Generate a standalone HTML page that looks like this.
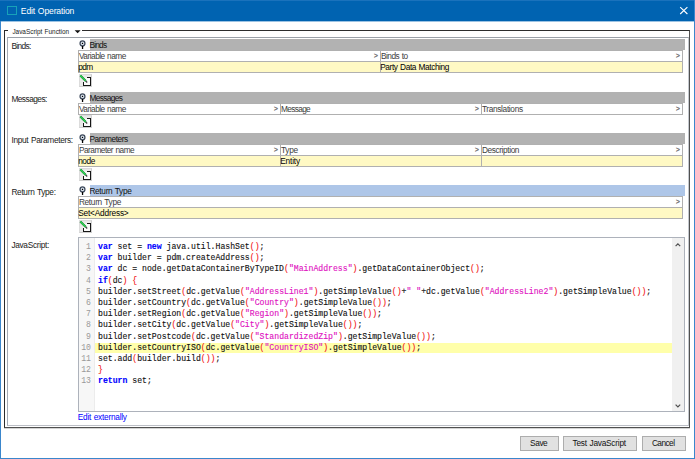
<!DOCTYPE html>
<html><head><meta charset="utf-8"><title>Edit Operation</title>
<style>
html,body{margin:0;padding:0;}
body{width:695px;height:459px;overflow:hidden;background:#fff;position:relative;font-family:"Liberation Sans",sans-serif;font-size:8.3px;letter-spacing:-0.48px;color:#1a1a1a;-webkit-text-stroke:0;word-spacing:0.6px;}
div,span{position:absolute;box-sizing:border-box;white-space:nowrap;}
.t{line-height:10px;height:10px;}
#titlebar{left:0;top:0;width:695px;height:22px;background:linear-gradient(#0063b1 0,#0063b1 21px,#9cc3e3 21px,#9cc3e3 22px);}
#wl{left:0;top:21px;width:1px;height:438px;background:#3a86cc;}
#wr{left:694px;top:0;width:1px;height:459px;background:#3a86cc;}
#wb{left:0;top:458px;width:695px;height:1px;background:#3a86cc;}
#wt{left:0;top:0;width:695px;height:1px;background:#1a72bc;}
#ticon{left:7.2px;top:5.5px;width:9.5px;height:9.6px;border:1px solid #17a2b8;}
#ttext{left:20.8px;top:5px;font-size:8.6px;letter-spacing:-0.15px;color:#fff;line-height:13px;}
.hdr{left:90px;width:595px;height:11px;background:#b2b2b2;}
.hdr.blue{background:#aec6e8;}
.hdr span{top:0.5px;left:-0.6px;letter-spacing:-0.44px;line-height:11px;color:#111;position:absolute;}
.tbl{left:78px;width:605px;border:1px solid #b0b0b0;background:#fff;}
.row{left:0;width:603px;height:10px;}
.row.y{background:#fff9c4;}
.cell{top:0;height:10px;line-height:10px;padding-left:0;margin-left:-0.1px;color:#3c3c3c;}
.row.y .cell{color:#000;margin-left:-0.8px;letter-spacing:-0.4px;}
.sep{width:1px;background:#b0b0b0;top:0;}
.hsep{left:0;width:603px;height:1px;background:#b0b0b0;}
.gt{top:0.1px;line-height:10px;color:#6c6c6c;font-size:6.6px;-webkit-text-stroke:0.35px #6c6c6c;letter-spacing:0;}
.lab{left:11.4px;line-height:10px;color:#1a1a1a;letter-spacing:-0.3px;}
.btn{top:436px;height:15px;background:#e1e1e1;border:1px solid #adadad;text-align:center;line-height:12.5px;color:#111;padding-right:1.6px;}
#code{left:78px;top:237px;width:607px;height:175px;border:1px solid #adb2bb;background:#fff;}
.ln{left:0;width:11.6px;text-align:right;color:#999;letter-spacing:-0.2px !important;}
.cl{left:19px;color:#111;-webkit-text-stroke:0.12px currentColor !important;}
#code .ln,#code .cl{-webkit-text-stroke:0;word-spacing:0;font-family:"Liberation Mono",monospace;font-size:8.17px;letter-spacing:0;line-height:11.2px;height:11.2px;}
.k{position:static;color:#0000ff;font-weight:bold;}
.p{position:static;color:#f21a1a;}
.s{position:static;color:#e010c0;}
</style></head>
<body>
<div id="titlebar"></div><div id="wt"></div><div id="wl"></div><div id="wr"></div><div id="wb"></div>
<div id="ticon"></div><div id="ttext">Edit Operation</div>
<svg style="position:absolute;left:679px;top:6px" width="10" height="10" viewBox="0 0 10 10"><path d="M1.2 1.2 L8.4 8.0 M8.4 1.2 L1.2 8.0" stroke="#fff" stroke-width="1.1" fill="none"/></svg>
<div style="left:4px;top:30px;width:686px;height:398px;border:1px solid;border-color:#2c2c2c #505050 #505050 #2c2c2c;"></div>
<div style="left:8px;top:29px;width:73.5px;height:3px;background:#fff;"></div>
<div style="left:12.4px;top:26.5px;font-size:6.45px;letter-spacing:-0.02px;line-height:9px;color:#1a1a1a;">JavaScript Function</div>
<svg style="position:absolute;left:74px;top:30px" width="8" height="4" viewBox="0 0 8 4"><path d="M0.6 0.2 L6.6 0.2 L3.6 3.3 Z" fill="#111"/></svg>
<div style="left:4px;top:428px;width:686px;height:1px;background:#d4d4d4;"></div>
<div style="left:7px;top:37px;width:682px;height:389px;border:1px solid;border-color:#9aa0a8 #c4c8ce #bcbfc6 #a4aab4;"></div>
<div class="lab t" style="top:41px;letter-spacing:-0.611px;">Binds:</div>
<svg style="position:absolute;left:79px;top:39.5px" width="8" height="10" viewBox="0 0 8 10"><circle cx="3.5" cy="3.4" r="2.45" fill="#d8e0ea" stroke="#3e4a5c" stroke-width="1.25"/><rect x="2.9" y="2.8" width="1.2" height="1.2" fill="#000"/><rect x="2.9" y="6" width="1.3" height="3" fill="#000"/></svg>
<div class="hdr" style="top:39px"><span style="letter-spacing:-0.770px;">Binds</span></div>
<div class="tbl" style="top:50px;height:23px">
<div class="row" style="top:0px">
<div class="cell" style="left:0px;letter-spacing:-0.503px;">Variable name</div>
<div class="gt" style="left:294.9px">&gt;</div>
<div class="sep" style="left:301px;height:10px"></div>
<div class="cell" style="left:302px;letter-spacing:-0.479px;">Binds to</div>
<div class="gt" style="left:596.9px">&gt;</div>
</div>
<div class="hsep" style="top:10px"></div>
<div class="row y" style="top:11px">
<div class="cell" style="left:0px;letter-spacing:-0.536px;">pdm</div>
<div class="sep" style="left:301px;height:10px"></div>
<div class="cell" style="left:302px;letter-spacing:-0.399px;">Party Data Matching</div>
</div>
</div>
<div style="left:79px;top:74px;width:13px;height:13px;background:#e9e9e9;border:1px solid;border-color:#dcdcdc #cfcfcf #cfcfcf #dcdcdc;"></div><svg style="position:absolute;left:79px;top:74px" width="13" height="13" viewBox="0 0 13 13"><rect x="4.5" y="3.5" width="7" height="8" fill="#fbfbfb"/><path d="M8 3.5 L11.5 3.5 L11.5 11.5 L4.5 11.5 L4.5 7.6" fill="none" stroke="#161616" stroke-width="1" shape-rendering="crispEdges"/><path d="M1.3 1.5 L6.8 7.0" stroke="#0f7a26" stroke-width="2.1" fill="none"/><path d="M1.3 1.5 L6.8 7.0" stroke="#30d858" stroke-width="1.1" fill="none"/><path d="M6.6 6.8 L8.2 8.5" stroke="#3a3a3a" stroke-width="1.2" fill="none"/></svg>
<div class="lab t" style="top:94px;letter-spacing:-0.521px;">Messages:</div>
<svg style="position:absolute;left:79px;top:92.5px" width="8" height="10" viewBox="0 0 8 10"><circle cx="3.5" cy="3.4" r="2.45" fill="#d8e0ea" stroke="#3e4a5c" stroke-width="1.25"/><rect x="2.9" y="2.8" width="1.2" height="1.2" fill="#000"/><rect x="2.9" y="6" width="1.3" height="3" fill="#000"/></svg>
<div class="hdr" style="top:92px"><span style="letter-spacing:-0.630px;">Messages</span></div>
<div class="tbl" style="top:103px;height:12px">
<div class="row" style="top:0px">
<div class="cell" style="left:0px;letter-spacing:-0.503px;">Variable name</div>
<div class="gt" style="left:194.9px">&gt;</div>
<div class="sep" style="left:201px;height:10px"></div>
<div class="cell" style="left:202px;letter-spacing:-0.642px;">Message</div>
<div class="gt" style="left:395.9px">&gt;</div>
<div class="sep" style="left:402px;height:10px"></div>
<div class="cell" style="left:403px;letter-spacing:-0.338px;">Translations</div>
<div class="gt" style="left:596.9px">&gt;</div>
</div>
</div>
<div style="left:79px;top:115px;width:13px;height:13px;background:#e9e9e9;border:1px solid;border-color:#dcdcdc #cfcfcf #cfcfcf #dcdcdc;"></div><svg style="position:absolute;left:79px;top:115px" width="13" height="13" viewBox="0 0 13 13"><rect x="4.5" y="3.5" width="7" height="8" fill="#fbfbfb"/><path d="M8 3.5 L11.5 3.5 L11.5 11.5 L4.5 11.5 L4.5 7.6" fill="none" stroke="#161616" stroke-width="1" shape-rendering="crispEdges"/><path d="M1.3 1.5 L6.8 7.0" stroke="#0f7a26" stroke-width="2.1" fill="none"/><path d="M1.3 1.5 L6.8 7.0" stroke="#30d858" stroke-width="1.1" fill="none"/><path d="M6.6 6.8 L8.2 8.5" stroke="#3a3a3a" stroke-width="1.2" fill="none"/></svg>
<div class="lab t" style="top:135px;letter-spacing:-0.300px;">Input Parameters:</div>
<svg style="position:absolute;left:79px;top:133.5px" width="8" height="10" viewBox="0 0 8 10"><circle cx="3.5" cy="3.4" r="2.45" fill="#d8e0ea" stroke="#3e4a5c" stroke-width="1.25"/><rect x="2.9" y="2.8" width="1.2" height="1.2" fill="#000"/><rect x="2.9" y="6" width="1.3" height="3" fill="#000"/></svg>
<div class="hdr" style="top:133px"><span style="letter-spacing:-0.462px;">Parameters</span></div>
<div class="tbl" style="top:144px;height:23px">
<div class="row" style="top:0px">
<div class="cell" style="left:0px;letter-spacing:-0.512px;">Parameter name</div>
<div class="gt" style="left:194.9px">&gt;</div>
<div class="sep" style="left:201px;height:10px"></div>
<div class="cell" style="left:202px;letter-spacing:-0.257px;">Type</div>
<div class="gt" style="left:395.9px">&gt;</div>
<div class="sep" style="left:402px;height:10px"></div>
<div class="cell" style="left:403px;letter-spacing:-0.392px;">Description</div>
<div class="gt" style="left:596.9px">&gt;</div>
</div>
<div class="hsep" style="top:10px"></div>
<div class="row y" style="top:11px">
<div class="cell" style="left:0px;letter-spacing:-0.448px;">node</div>
<div class="sep" style="left:201px;height:10px"></div>
<div class="cell" style="left:202px;letter-spacing:-0.176px;">Entity</div>
<div class="sep" style="left:402px;height:10px"></div>
<div class="cell" style="left:403px;"></div>
</div>
</div>
<div style="left:79px;top:168px;width:13px;height:13px;background:#e9e9e9;border:1px solid;border-color:#dcdcdc #cfcfcf #cfcfcf #dcdcdc;"></div><svg style="position:absolute;left:79px;top:168px" width="13" height="13" viewBox="0 0 13 13"><rect x="4.5" y="3.5" width="7" height="8" fill="#fbfbfb"/><path d="M8 3.5 L11.5 3.5 L11.5 11.5 L4.5 11.5 L4.5 7.6" fill="none" stroke="#161616" stroke-width="1" shape-rendering="crispEdges"/><path d="M1.3 1.5 L6.8 7.0" stroke="#0f7a26" stroke-width="2.1" fill="none"/><path d="M1.3 1.5 L6.8 7.0" stroke="#30d858" stroke-width="1.1" fill="none"/><path d="M6.6 6.8 L8.2 8.5" stroke="#3a3a3a" stroke-width="1.2" fill="none"/></svg>
<div class="lab t" style="top:187px;letter-spacing:-0.309px;">Return Type:</div>
<svg style="position:absolute;left:79px;top:185.5px" width="8" height="10" viewBox="0 0 8 10"><circle cx="3.5" cy="3.4" r="2.45" fill="#d8e0ea" stroke="#3e4a5c" stroke-width="1.25"/><rect x="2.9" y="2.8" width="1.2" height="1.2" fill="#000"/><rect x="2.9" y="6" width="1.3" height="3" fill="#000"/></svg>
<div class="hdr blue" style="top:185px"><span style="letter-spacing:-0.320px;">Return Type</span></div>
<div class="tbl" style="top:196px;height:23px">
<div class="row" style="top:0px">
<div class="cell" style="left:0px;letter-spacing:-0.320px;">Return Type</div>
<div class="gt" style="left:596.9px">&gt;</div>
</div>
<div class="hsep" style="top:10px"></div>
<div class="row y" style="top:11px">
<div class="cell" style="left:0px;letter-spacing:-0.191px;">Set&lt;Address&gt;</div>
</div>
</div>
<div style="left:79px;top:220px;width:13px;height:13px;background:#e9e9e9;border:1px solid;border-color:#dcdcdc #cfcfcf #cfcfcf #dcdcdc;"></div><svg style="position:absolute;left:79px;top:220px" width="13" height="13" viewBox="0 0 13 13"><rect x="4.5" y="3.5" width="7" height="8" fill="#fbfbfb"/><path d="M8 3.5 L11.5 3.5 L11.5 11.5 L4.5 11.5 L4.5 7.6" fill="none" stroke="#161616" stroke-width="1" shape-rendering="crispEdges"/><path d="M1.3 1.5 L6.8 7.0" stroke="#0f7a26" stroke-width="2.1" fill="none"/><path d="M1.3 1.5 L6.8 7.0" stroke="#30d858" stroke-width="1.1" fill="none"/><path d="M6.6 6.8 L8.2 8.5" stroke="#3a3a3a" stroke-width="1.2" fill="none"/></svg>
<div class="lab t" style="top:240px;letter-spacing:-0.309px;">JavaScript:</div>
<div id="code">
<div style="left:0;top:0;width:16px;height:173px;background:#f7f7f7;border-right:1px solid #ececec;"></div>
<div style="left:16px;top:105px;width:577px;height:10px;background:#ffffaa;"></div>
<div style="left:593px;top:0;width:12px;height:173px;background:#f0f0f0;"></div>
<svg style="position:absolute;left:595px;top:4px" width="8" height="6" viewBox="0 0 8 6"><path d="M1.6 4.2 L3.9 1.9 L6.2 4.2" stroke="#505050" stroke-width="1.2" fill="none"/></svg>
<svg style="position:absolute;left:595px;top:165px" width="8" height="6" viewBox="0 0 8 6"><path d="M1.6 1.7 L3.9 4.0 L6.2 1.7" stroke="#505050" stroke-width="1.2" fill="none"/></svg>
<div class="ln" style="top:3px">1</div>
<div class="cl" style="top:3px"><span class="k">var</span> set = <span class="k">new</span> java.util.HashSet<span class="p">()</span>;</div>
<div class="ln" style="top:14.2px">2</div>
<div class="cl" style="top:14.2px"><span class="k">var</span> builder = pdm.createAddress<span class="p">()</span>;</div>
<div class="ln" style="top:25.4px">3</div>
<div class="cl" style="top:25.4px"><span class="k">var</span> dc = node.getDataContainerByTypeID<span class="p">(</span><span class="s">"MainAddress"</span><span class="p">)</span>.getDataContainerObject<span class="p">()</span>;</div>
<div class="ln" style="top:36.6px">4</div>
<div class="cl" style="top:36.6px"><span class="k">if</span><span class="p">(</span>dc<span class="p">)</span> <span class="p">{</span></div>
<div class="ln" style="top:47.8px">5</div>
<div class="cl" style="top:47.8px">builder.setStreet<span class="p">(</span>dc.getValue<span class="p">(</span><span class="s">"AddressLine1"</span><span class="p">)</span>.getSimpleValue<span class="p">()</span>+<span class="s">" "</span>+dc.getValue<span class="p">(</span><span class="s">"AddressLine2"</span><span class="p">)</span>.getSimpleValue<span class="p">())</span>;</div>
<div class="ln" style="top:59px">6</div>
<div class="cl" style="top:59px">builder.setCountry<span class="p">(</span>dc.getValue<span class="p">(</span><span class="s">"Country"</span><span class="p">)</span>.getSimpleValue<span class="p">())</span>;</div>
<div class="ln" style="top:70.2px">7</div>
<div class="cl" style="top:70.2px">builder.setRegion<span class="p">(</span>dc.getValue<span class="p">(</span><span class="s">"Region"</span><span class="p">)</span>.getSimpleValue<span class="p">())</span>;</div>
<div class="ln" style="top:81.4px">8</div>
<div class="cl" style="top:81.4px">builder.setCity<span class="p">(</span>dc.getValue<span class="p">(</span><span class="s">"City"</span><span class="p">)</span>.getSimpleValue<span class="p">())</span>;</div>
<div class="ln" style="top:92.6px">9</div>
<div class="cl" style="top:92.6px">builder.setPostcode<span class="p">(</span>dc.getValue<span class="p">(</span><span class="s">"StandardizedZip"</span><span class="p">)</span>.getSimpleValue<span class="p">())</span>;</div>
<div class="ln" style="top:103.8px">10</div>
<div class="cl" style="top:103.8px">builder.setCountryISO<span class="p">(</span>dc.getValue<span class="p">(</span><span class="s">"CountryISO"</span><span class="p">)</span>.getSimpleValue<span class="p">())</span>;</div>
<div class="ln" style="top:115px">11</div>
<div class="cl" style="top:115px">set.add<span class="p">(</span>builder.build<span class="p">())</span>;</div>
<div class="ln" style="top:126.2px">12</div>
<div class="cl" style="top:126.2px"><span class="p">}</span></div>
<div class="ln" style="top:137.4px">13</div>
<div class="cl" style="top:137.4px"><span class="k">return</span> set;</div>
</div>
<div class="t" style="left:77.8px;top:411.7px;color:#0000ff;letter-spacing:-0.250px;">Edit externally</div>
<div class="btn" style="left:520px;width:39px;letter-spacing:-0.435px;">Save</div>
<div class="btn" style="left:563px;width:74px;letter-spacing:-0.239px;">Test JavaScript</div>
<div class="btn" style="left:642px;width:44px;letter-spacing:-0.532px;">Cancel</div>
</body></html>
